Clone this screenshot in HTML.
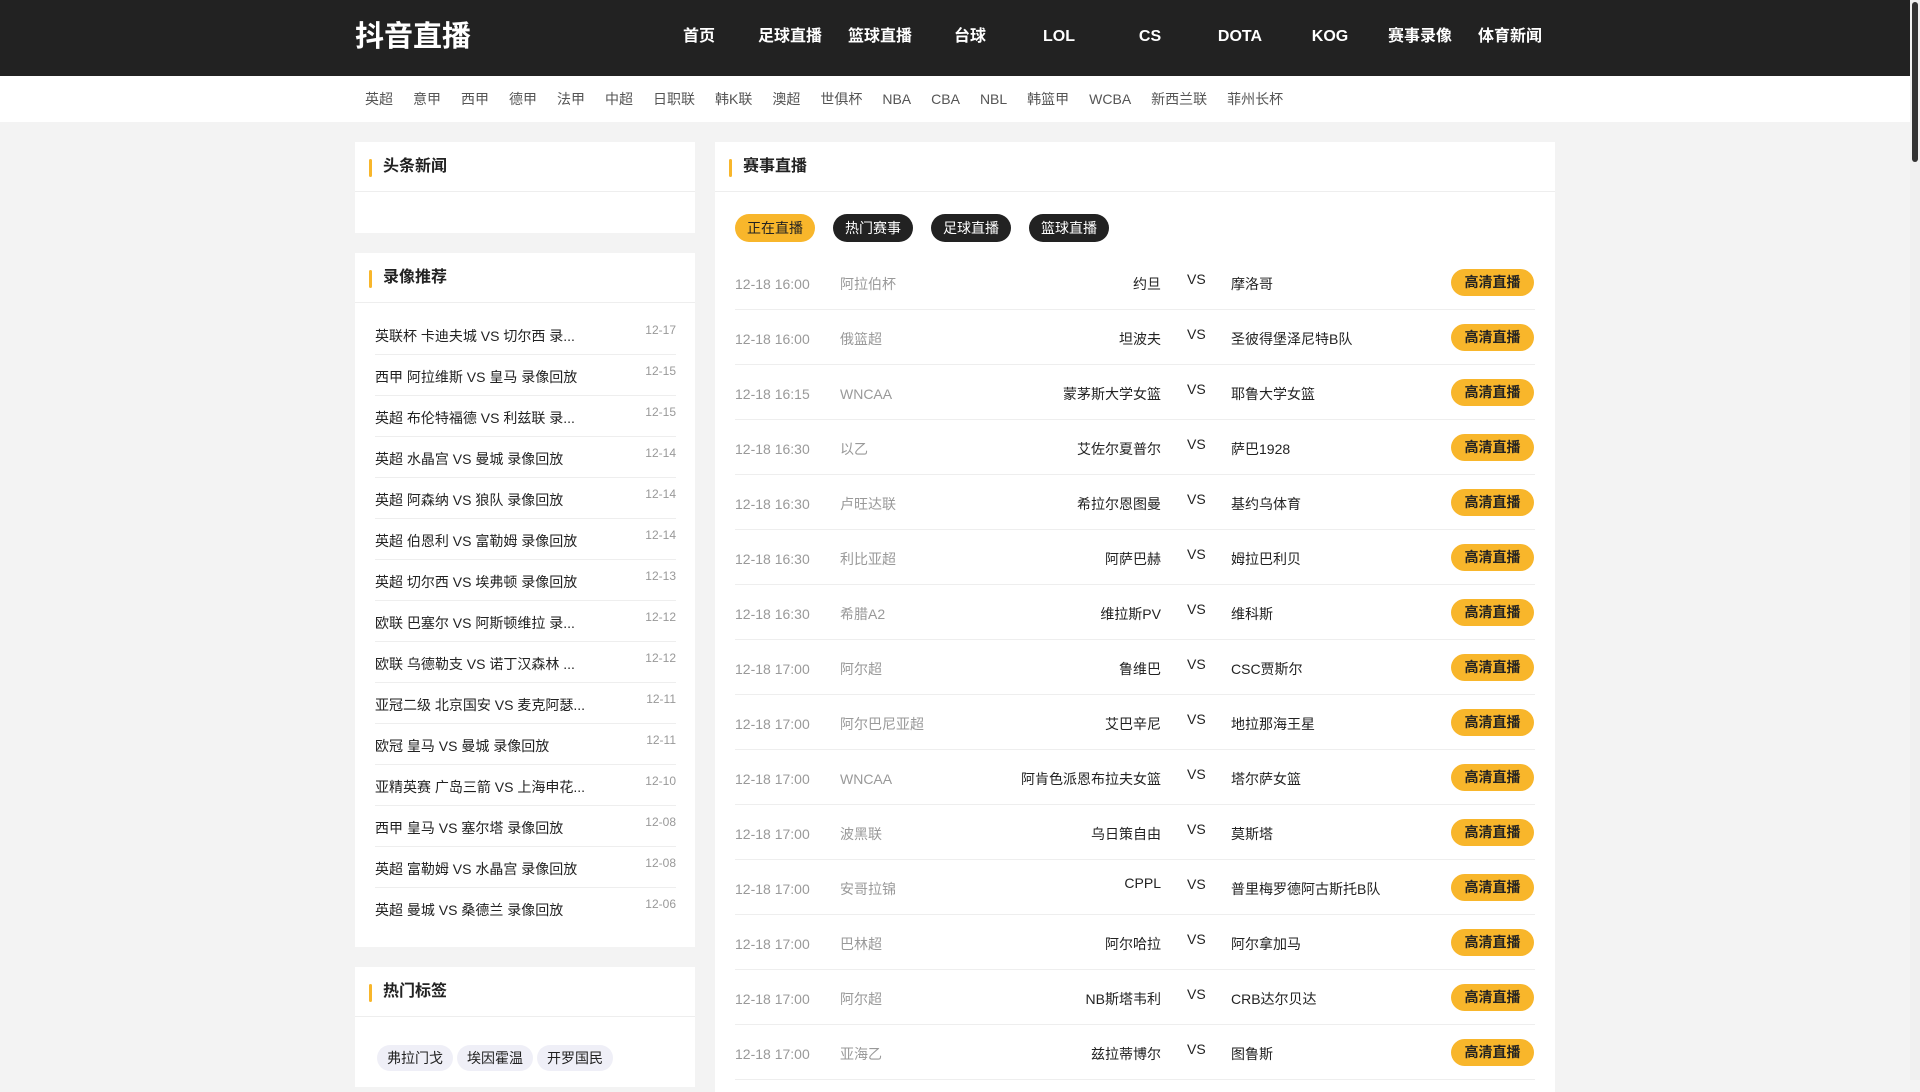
<!DOCTYPE html>
<html><head><meta charset="utf-8"><style>
*{margin:0;padding:0;box-sizing:border-box}
body{width:1920px;height:1080px;overflow:hidden;background:#f3f3f3;font-family:"Liberation Sans","Noto Sans CJK SC",sans-serif;color:#222;position:relative}
.hd{position:absolute;left:0;top:0;width:1910px;height:76px;background:#222}
.logo{position:absolute;left:355px;top:17px;font-size:29px;font-weight:bold;color:#fff;line-height:40px}
.nav span{position:absolute;top:26px;font-size:16px;font-weight:bold;color:#fff;transform:translateX(-50%);white-space:nowrap;line-height:22px}
.sub{position:absolute;left:0;top:76px;width:1910px;height:46px;background:#fff}
.sub div{position:absolute;left:355px;top:13px;display:flex;font-size:14px;color:#555;line-height:20px}
.sub span{padding:0 10px}
.box{position:absolute;background:#fff}
.tt{height:50px;border-bottom:1px solid #eee;position:relative;font-size:16px;font-weight:bold;line-height:50px;padding-left:28px}
.tt:before{content:"";position:absolute;left:14px;top:17px;width:3px;height:18px;background:#f8b62b;border-radius:2px}
.li{position:absolute;left:20px;width:301px;height:41px;border-bottom:1px solid #eee;font-size:14px}
.li b{font-weight:normal;position:absolute;left:0;top:12px}
.li i{font-style:normal;position:absolute;right:0;top:9px;font-size:12px;color:#999}
.tag{position:absolute;top:1045px;height:26px;line-height:26px;padding:0 10px;background:#efeff7;border-radius:13px;font-size:14px}
.tab{position:absolute;top:214px;width:80px;height:28px;line-height:28px;text-align:center;border-radius:14px;background:#222;color:#fff;font-size:14px}
.row{position:absolute;left:20px;width:800px;height:55px;border-bottom:1px solid #eee;font-size:14px}
.row span{position:absolute;top:20px;line-height:18px;white-space:nowrap}
.t{left:0;color:#999}.l{left:105px;color:#999}.h{right:374px}.v{left:452px;top:15px!important}.a{left:496px}
.btn{position:absolute;left:716px;top:14px;width:83px;height:27px;line-height:27px;text-align:center;background:#f8b62b;border-radius:14px;font-weight:bold;font-size:14px}
.sb{position:absolute;left:1910px;top:0;width:10px;height:1080px;background:#f0f0f0}
.sb div{position:absolute;left:2px;top:2px;width:6px;height:160px;background:#333;border-radius:3px}
</style></head><body>
<div class="hd"><div class="logo">抖音直播</div>
<div class="nav"><span style="left:699px">首页</span><span style="left:790px">足球直播</span><span style="left:880px">篮球直播</span><span style="left:970px">台球</span><span style="left:1059px">LOL</span><span style="left:1150px">CS</span><span style="left:1240px">DOTA</span><span style="left:1330px">KOG</span><span style="left:1420px">赛事录像</span><span style="left:1510px">体育新闻</span></div></div>
<div class="sub"><div><span>英超</span><span>意甲</span><span>西甲</span><span>德甲</span><span>法甲</span><span>中超</span><span>日职联</span><span>韩K联</span><span>澳超</span><span>世俱杯</span><span>NBA</span><span>CBA</span><span>NBL</span><span>韩篮甲</span><span>WCBA</span><span>新西兰联</span><span>菲州长杯</span></div></div>

<div class="box" style="left:355px;top:142px;width:340px;height:91px"><div class="tt">头条新闻</div></div>
<div class="box" style="left:355px;top:253px;width:340px;height:694px"><div class="tt">录像推荐</div>
<div class="li" style="top:61px"><b>英联杯 卡迪夫城 VS 切尔西 录...</b><i>12-17</i></div>
<div class="li" style="top:102px"><b>西甲 阿拉维斯 VS 皇马 录像回放</b><i>12-15</i></div>
<div class="li" style="top:143px"><b>英超 布伦特福德 VS 利兹联 录...</b><i>12-15</i></div>
<div class="li" style="top:184px"><b>英超 水晶宫 VS 曼城 录像回放</b><i>12-14</i></div>
<div class="li" style="top:225px"><b>英超 阿森纳 VS 狼队 录像回放</b><i>12-14</i></div>
<div class="li" style="top:266px"><b>英超 伯恩利 VS 富勒姆 录像回放</b><i>12-14</i></div>
<div class="li" style="top:307px"><b>英超 切尔西 VS 埃弗顿 录像回放</b><i>12-13</i></div>
<div class="li" style="top:348px"><b>欧联 巴塞尔 VS 阿斯顿维拉 录...</b><i>12-12</i></div>
<div class="li" style="top:389px"><b>欧联 乌德勒支 VS 诺丁汉森林 ...</b><i>12-12</i></div>
<div class="li" style="top:430px"><b>亚冠二级 北京国安 VS 麦克阿瑟...</b><i>12-11</i></div>
<div class="li" style="top:471px"><b>欧冠 皇马 VS 曼城 录像回放</b><i>12-11</i></div>
<div class="li" style="top:512px"><b>亚精英赛 广岛三箭 VS 上海申花...</b><i>12-10</i></div>
<div class="li" style="top:553px"><b>西甲 皇马 VS 塞尔塔 录像回放</b><i>12-08</i></div>
<div class="li" style="top:594px"><b>英超 富勒姆 VS 水晶宫 录像回放</b><i>12-08</i></div>
<div class="li" style="top:635px;border:0"><b>英超 曼城 VS 桑德兰 录像回放</b><i>12-06</i></div>
</div>
<div class="box" style="left:355px;top:967px;width:340px;height:120px"><div class="tt">热门标签</div></div>
<div class="tag" style="left:377px">弗拉门戈</div><div class="tag" style="left:457px">埃因霍温</div><div class="tag" style="left:537px">开罗国民</div>

<div class="box" style="left:715px;top:142px;width:840px;height:950px"><div class="tt">赛事直播</div>
<div class="tab" style="left:20px;top:72px;background:#f8b62b;color:#222">正在直播</div>
<div class="tab" style="left:118px;top:72px">热门赛事</div>
<div class="tab" style="left:216px;top:72px">足球直播</div>
<div class="tab" style="left:314px;top:72px">篮球直播</div>
<div class="row" style="top:113px"><span class="t">12-18 16:00</span><span class="l">阿拉伯杯</span><span class="h">约旦</span><span class="v">VS</span><span class="a">摩洛哥</span><div class="btn">高清直播</div></div>
<div class="row" style="top:168px"><span class="t">12-18 16:00</span><span class="l">俄篮超</span><span class="h">坦波夫</span><span class="v">VS</span><span class="a">圣彼得堡泽尼特B队</span><div class="btn">高清直播</div></div>
<div class="row" style="top:223px"><span class="t">12-18 16:15</span><span class="l">WNCAA</span><span class="h">蒙茅斯大学女篮</span><span class="v">VS</span><span class="a">耶鲁大学女篮</span><div class="btn">高清直播</div></div>
<div class="row" style="top:278px"><span class="t">12-18 16:30</span><span class="l">以乙</span><span class="h">艾佐尔夏普尔</span><span class="v">VS</span><span class="a">萨巴1928</span><div class="btn">高清直播</div></div>
<div class="row" style="top:333px"><span class="t">12-18 16:30</span><span class="l">卢旺达联</span><span class="h">希拉尔恩图曼</span><span class="v">VS</span><span class="a">基约乌体育</span><div class="btn">高清直播</div></div>
<div class="row" style="top:388px"><span class="t">12-18 16:30</span><span class="l">利比亚超</span><span class="h">阿萨巴赫</span><span class="v">VS</span><span class="a">姆拉巴利贝</span><div class="btn">高清直播</div></div>
<div class="row" style="top:443px"><span class="t">12-18 16:30</span><span class="l">希腊A2</span><span class="h">维拉斯PV</span><span class="v">VS</span><span class="a">维科斯</span><div class="btn">高清直播</div></div>
<div class="row" style="top:498px"><span class="t">12-18 17:00</span><span class="l">阿尔超</span><span class="h">鲁维巴</span><span class="v">VS</span><span class="a">CSC贾斯尔</span><div class="btn">高清直播</div></div>
<div class="row" style="top:553px"><span class="t">12-18 17:00</span><span class="l">阿尔巴尼亚超</span><span class="h">艾巴辛尼</span><span class="v">VS</span><span class="a">地拉那海王星</span><div class="btn">高清直播</div></div>
<div class="row" style="top:608px"><span class="t">12-18 17:00</span><span class="l">WNCAA</span><span class="h">阿肯色派恩布拉夫女篮</span><span class="v">VS</span><span class="a">塔尔萨女篮</span><div class="btn">高清直播</div></div>
<div class="row" style="top:663px"><span class="t">12-18 17:00</span><span class="l">波黑联</span><span class="h">乌日策自由</span><span class="v">VS</span><span class="a">莫斯塔</span><div class="btn">高清直播</div></div>
<div class="row" style="top:718px"><span class="t">12-18 17:00</span><span class="l">安哥拉锦</span><span class="h" style="top:14px">CPPL</span><span class="v">VS</span><span class="a">普里梅罗德阿古斯托B队</span><div class="btn">高清直播</div></div>
<div class="row" style="top:773px"><span class="t">12-18 17:00</span><span class="l">巴林超</span><span class="h">阿尔哈拉</span><span class="v">VS</span><span class="a">阿尔拿加马</span><div class="btn">高清直播</div></div>
<div class="row" style="top:828px"><span class="t">12-18 17:00</span><span class="l">阿尔超</span><span class="h">NB斯塔韦利</span><span class="v">VS</span><span class="a">CRB达尔贝达</span><div class="btn">高清直播</div></div>
<div class="row" style="top:883px"><span class="t">12-18 17:00</span><span class="l">亚海乙</span><span class="h">兹拉蒂博尔</span><span class="v">VS</span><span class="a">图鲁斯</span><div class="btn">高清直播</div></div>
</div>
<div class="sb"><div></div></div>
</body></html>
